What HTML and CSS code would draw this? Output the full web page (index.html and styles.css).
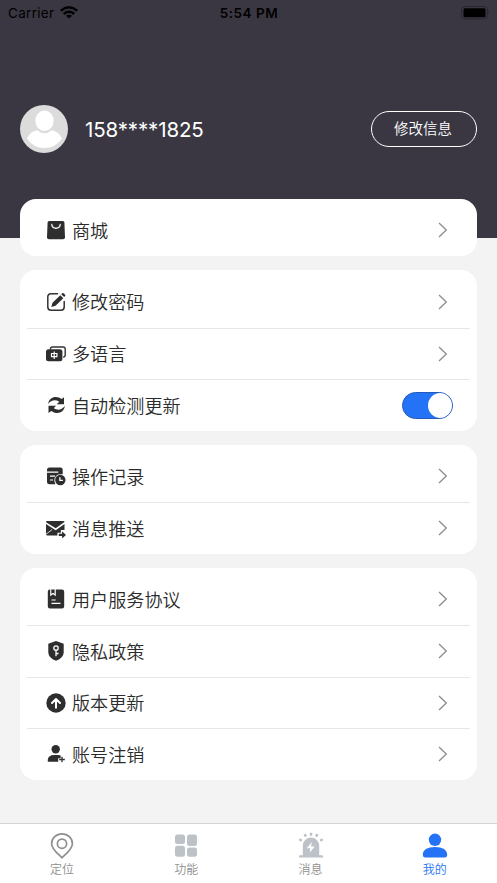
FILE: index.html
```
<!DOCTYPE html>
<html lang="zh-CN">
<head>
<meta charset="utf-8">
<title>我的</title>
<link rel="stylesheet" href="styles.css">
</head>
<body>
<svg width="0" height="0" class="defs"><defs>
<symbol id="chev" viewBox="0 0 10 16"><path d="M1 1l7.300 7L1 15" fill="none" stroke="#8c8c8c" stroke-width="1.300"/></symbol>
</defs></svg>
<div class="app">
<header class="header">
  <div class="status">
    <div class="carrier"><span>Carrier</span>
      <svg width="18" height="13" viewBox="0 0 18 13"><g fill="none" stroke="#000" stroke-width="2.500"><path d="M.8 4.700Q9-2.100 17.200 4.700"/><path d="M3.700 7.900Q9 3.700 14.300 7.900"/></g><path d="M6 9.800Q9 7.700 12 9.800L9 12.600z"/></svg>
    </div>
    <div class="time">5:54 PM</div>
    <div class="battery"><svg width="30" height="14" viewBox="0 0 30 14"><rect x="1.500" y=".5" width="26" height="12.500" rx="3.500" fill="none" stroke="#28262e"/><rect x="3.500" y="2.300" width="22" height="9" rx="1.500"/><path d="M28.500 4.700q1.600 2 0 4z" fill="#28262e"/></svg></div>
  </div>
  <div class="profile">
    <svg width="48" height="48" viewBox="0 0 48 48"><circle cx="24" cy="24" r="24" fill="#dcdcdc"/><ellipse cx="24.500" cy="15.800" rx="9.200" ry="10.300" fill="#fff"/><path d="M7 33.500C9.500 28 14 25.500 17.300 25.200Q24.500 31.500 31.700 25.200C35 25.500 39.500 28 42 33.500Q35.500 43 24.500 43T7 33.500z" fill="#fff"/></svg>
    <div class="phone">158****1825</div>
    <div class="edit">修改信息</div>
  </div>
</header>
<main class="cards">
  <section class="card">
    <div class="row"><svg class="icon" viewBox="0 0 20 20"><path d="M3.200 1h13.600q1.500 0 1.600 1.500l.6 14.800q0 2-2 2H3q-2 0-2-2l.6-14.800Q1.700 1 3.200 1z"/><path d="M5.800 4.500c.5 5 7.900 5 8.400 0" fill="none" stroke="#fff" stroke-width="1.300" stroke-linecap="round"/></svg><span class="label">商城</span><svg class="chev"><use href="#chev"/></svg></div>
  </section>
  <section class="card">
    <div class="row"><svg class="icon" viewBox="0 0 20 20"><path d="M11.500 1.800H5Q1.800 1.800 1.800 5v10q0 3.200 3.200 3.200h10q3.200 0 3.200-3.200V9.500" fill="none" stroke="#333" stroke-width="1.500" stroke-linecap="round"/><path d="M5.300 15l1.200-4.200 7.800-7.600 3 3-7.800 7.500zM15.200 2.300l1-1q.7-.6 1.400 0l1.500 1.500q.6.700 0 1.300l-1 1z"/></svg><span class="label">修改密码</span><svg class="chev"><use href="#chev"/></svg></div>
    <div class="row"><svg class="icon" viewBox="0 0 20 20"><path d="M4.500 5.500V5q0-2 2-2h10.700q2 0 2 2v6q0 2-2 2" fill="none" stroke="#333" stroke-width="1.400"/><rect x="0" y="5.300" width="16.400" height="12" rx="2.500"/><path d="M5.500 9.500h5.400v3.200H5.500zM8.200 7.500v7.500" fill="none" stroke="#fff" stroke-width="1.200"/></svg><span class="label">多语言</span><svg class="chev"><use href="#chev"/></svg></div>
    <div class="row"><svg class="icon" viewBox="0 0 20 20"><path d="M2.200 9C3 1.500 11 .5 15.700 4.100L18 2.300V9.200h-7.300l2.600-2.500C9.300 4.300 5 5 2.200 9z"/><path d="M18.800 11c-.8 7.500-8.800 8.500-13.500 4.900L2.500 18v-7.200h7.600l-2.400 2.500c4 2.400 8.300 1.700 11.100-2.300z"/></svg><span class="label">自动检测更新</span><div class="switch"><i></i></div></div>
  </section>
  <section class="card">
    <div class="row"><svg class="icon" viewBox="0 0 20 20"><path d="M3.500 1.500h11q2.200 0 2.200 2.200V8.300Q9 7.300 8.300 14q0 2.500 1.200 4.200h-6Q1 18.200 1 16V4q0-2.500 2.500-2.500z"/><path d="M1 6.200h11.300M4 10.200h5M4 14h3" stroke="#fff" stroke-width="1.200"/><circle cx="14.300" cy="14" r="5.200"/><path d="M13.900 11.300v3h3" fill="none" stroke="#fff" stroke-width="1.300"/></svg><span class="label">操作记录</span><svg class="chev"><use href="#chev"/></svg></div>
    <div class="row"><svg class="icon" viewBox="0 0 20 20"><path d="M1 3h16.500q1 0 1 1L9.700 10.300 0 4.200Q0 3 1 3z"/><path d="M0 6l9.700 6.200L18.500 6v6h-3.600v2.700h-3.500v2.800H1.500Q0 17.500 0 16z"/><path d="M0 16.200l6.200-4.700" stroke="#fff" stroke-width=".8"/><path d="M12.800 15.800h3.300v-2.500l4 3.700-4 3.500v-2.500h-3.300z"/></svg><span class="label">消息推送</span><svg class="chev"><use href="#chev"/></svg></div>
  </section>
  <section class="card">
    <div class="row"><svg class="icon" viewBox="0 0 20 20"><path d="M3.500.5h.7v6.700L7 5.300l2.800 1.900V.5H16q2.200 0 2.200 2.200v14.600q0 2.200-2.200 2.200H4Q1.800 19.500 1.800 17.300V2.500Q1.800.8 3.500.5zM5.300.5h3.300v4.300L7 3.700 5.300 4.800z"/><path d="M5.500 11h4.200M5.500 14.300h9" stroke="#fff" stroke-width="1.200"/></svg><span class="label">用户服务协议</span><svg class="chev"><use href="#chev"/></svg></div>
    <div class="row"><svg class="icon" viewBox="0 0 20 20"><path d="M10 0l7.700 2.800v8.400q0 5.500-7.700 8.600-7.700-3.100-7.700-8.600V2.800z"/><circle cx="10" cy="7" r="2.200" fill="none" stroke="#fff" stroke-width="1.300"/><path d="M10 9v6.200M10 12.500h2.500" stroke="#fff" stroke-width="1.300"/></svg><span class="label">隐私政策</span><svg class="chev"><use href="#chev"/></svg></div>
    <div class="row"><svg class="icon" viewBox="0 0 20 20"><circle cx="10" cy="10" r="9.700"/><path d="M10 14.800V6.500M6 10l4-4 4 4" fill="none" stroke="#fff" stroke-width="2" stroke-linecap="round" stroke-linejoin="round"/></svg><span class="label">版本更新</span><svg class="chev"><use href="#chev"/></svg></div>
    <div class="row"><svg class="icon" viewBox="0 0 20 20"><circle cx="9.700" cy="5.300" r="4.200"/><path d="M1.800 17.800v-2.300Q2.500 11 8 11h4q1.500 0 2.700.5v2.700h-2.500v3.600z"/><path d="M16 12.700v5.600M13.200 15.500h5.600" stroke="#333" stroke-width="1.300"/></svg><span class="label">账号注销</span><svg class="chev"><use href="#chev"/></svg></div>
  </section>
</main>
<nav class="tabs">
  <div class="tab"><svg viewBox="0 0 26 26"><path d="M13 24.800C10.500 22 2.600 16.500 2.600 10.700a10.400 9.900 0 0 1 20.800 0C23.400 16.500 15.500 22 13 24.800z" fill="none" stroke="#8f8f8f" stroke-width="1.700"/><circle cx="13" cy="10.700" r="4.600" fill="none" stroke="#8f8f8f" stroke-width="1.700"/></svg><span>定位</span></div>
  <div class="tab"><svg viewBox="0 0 26 26" fill="#bdc1c8"><rect x="2" y="1.500" width="10" height="9.500" rx="2.500"/><rect x="14" y="1.500" width="10" height="11.500" rx="2.500"/><rect x="2" y="12.700" width="10" height="11" rx="2.500"/><rect x="14" y="14.500" width="10" height="9.300" rx="2.500"/></svg><span>功能</span></div>
  <div class="tab"><svg viewBox="0 0 26 26" fill="#bdc1c8"><path d="M4.800 22.300v-9.500a8.200 8.200 0 0 1 16.400 0v9.500h3q.8 0 .8 1.300v.8H1v-.8q0-1.300.8-1.300z"/><path d="M13.800 9l-5 6.300h3.500l-.5 4.200 5-6h-3.700z" fill="#fff"/><path d="M1.300 6.300l2.500 1.500M6.500 1.200L8 3.700M13-.3v3M19.500 1.200L18 3.700M24.700 6.300l-2.500 1.500" stroke="#bdc1c8" stroke-width="2.500"/></svg><span>消息</span></div>
  <div class="tab active"><svg viewBox="0 0 26 26" fill="#2473f7"><circle cx="13" cy="6.800" r="6.200"/><path d="M.8 21.500c0-4.500 4.500-7.500 12.200-7.500s12.200 3 12.200 7.500q0 3-2.500 3H3.300q-2.500 0-2.500-3z"/></svg><span>我的</span></div>
</nav>
</div>
</body>
</html>
```
FILE: styles.css
```
* { box-sizing: border-box; }
body {
  margin: 0;
  background: #f3f3f3;
  font-family: Inter, "Noto Sans CJK SC", sans-serif;
  font-weight: 350;
  color: #333;
}
.defs { display: block; }
.app { height: 883px; display: flex; flex-direction: column; overflow: hidden; }
.header { height: 238px; background: #3a3742; flex: none; }
.status {
  height: 26px;
  padding: 0 7px 0 8px;
  display: grid;
  grid-template-columns: 1fr auto 1fr;
  align-items: center;
  font-size: 13.5px;
  font-weight: 400;
  line-height: 26px;
  color: #000;
}
.carrier { display: flex; align-items: center; gap: 6px; letter-spacing: .3px; }
.carrier svg { margin-bottom: 2px; }
.time { font-weight: 600; letter-spacing: .5px; }
.battery { display: flex; justify-content: flex-end; }
.profile {
  margin-top: 79px;
  padding: 0 20px;
  height: 48px;
  display: flex;
  align-items: center;
  color: #fff;
}
.phone { margin-left: 17px; padding-top: 1px; font-size: 20.500px; font-weight: 400; letter-spacing: -.15px; flex: 1; }
.edit {
  width: 106px;
  height: 36px;
  padding-right: 2px;
  border: 1.500px solid #fff;
  border-radius: 18px;
  text-align: center;
  font-size: 14.500px;
  line-height: 33px;
}
.cards {
  flex: 1;
  margin-top: -39px;
  padding: 0 20px;
  display: flex;
  flex-direction: column;
  gap: 14.300px;
}
.card { background: #fff; border-radius: 16px; padding: 5.700px 7px 0; }
.row {
  height: 51.500px;
  padding: 0 22px 0 19px;
  display: flex;
  align-items: center;
}
.row + .row { border-top: 1px solid #e6e6e6; }
.icon { width: 20px; height: 20px; fill: #2e2e2e; flex: none; }
.label { margin-left: 6px; padding-top: 1px; flex: 1; font-size: 18.100px; line-height: 26px; color: #2b2b2b; }
.chev { width: 10px; height: 16px; }
.switch {
  width: 51px;
  height: 27px;
  margin-right: -5px;
  padding: 0 0 0 25px;
  border: 1px solid #2459b8;
  border-radius: 14px;
  background: #2473f7;
}
.switch i { display: block; width: 24px; height: 25px; border-radius: 50%; background: #fff; }
.tabs {
  height: 60.500px;
  flex: none;
  display: grid;
  grid-template-columns: repeat(4, 1fr);
  background: #fff;
  border-top: 1px solid #d5d5d5;
}
.tab {
  padding-top: 9px;
  display: flex;
  flex-direction: column;
  align-items: center;
  font-size: 12px;
  line-height: 18px;
  color: #8f8f8f;
}
.tab svg { width: 26px; height: 26px; overflow: visible; }
.tab span { margin-top: 2px; }
.tab.active { color: #2473f7; }
```
